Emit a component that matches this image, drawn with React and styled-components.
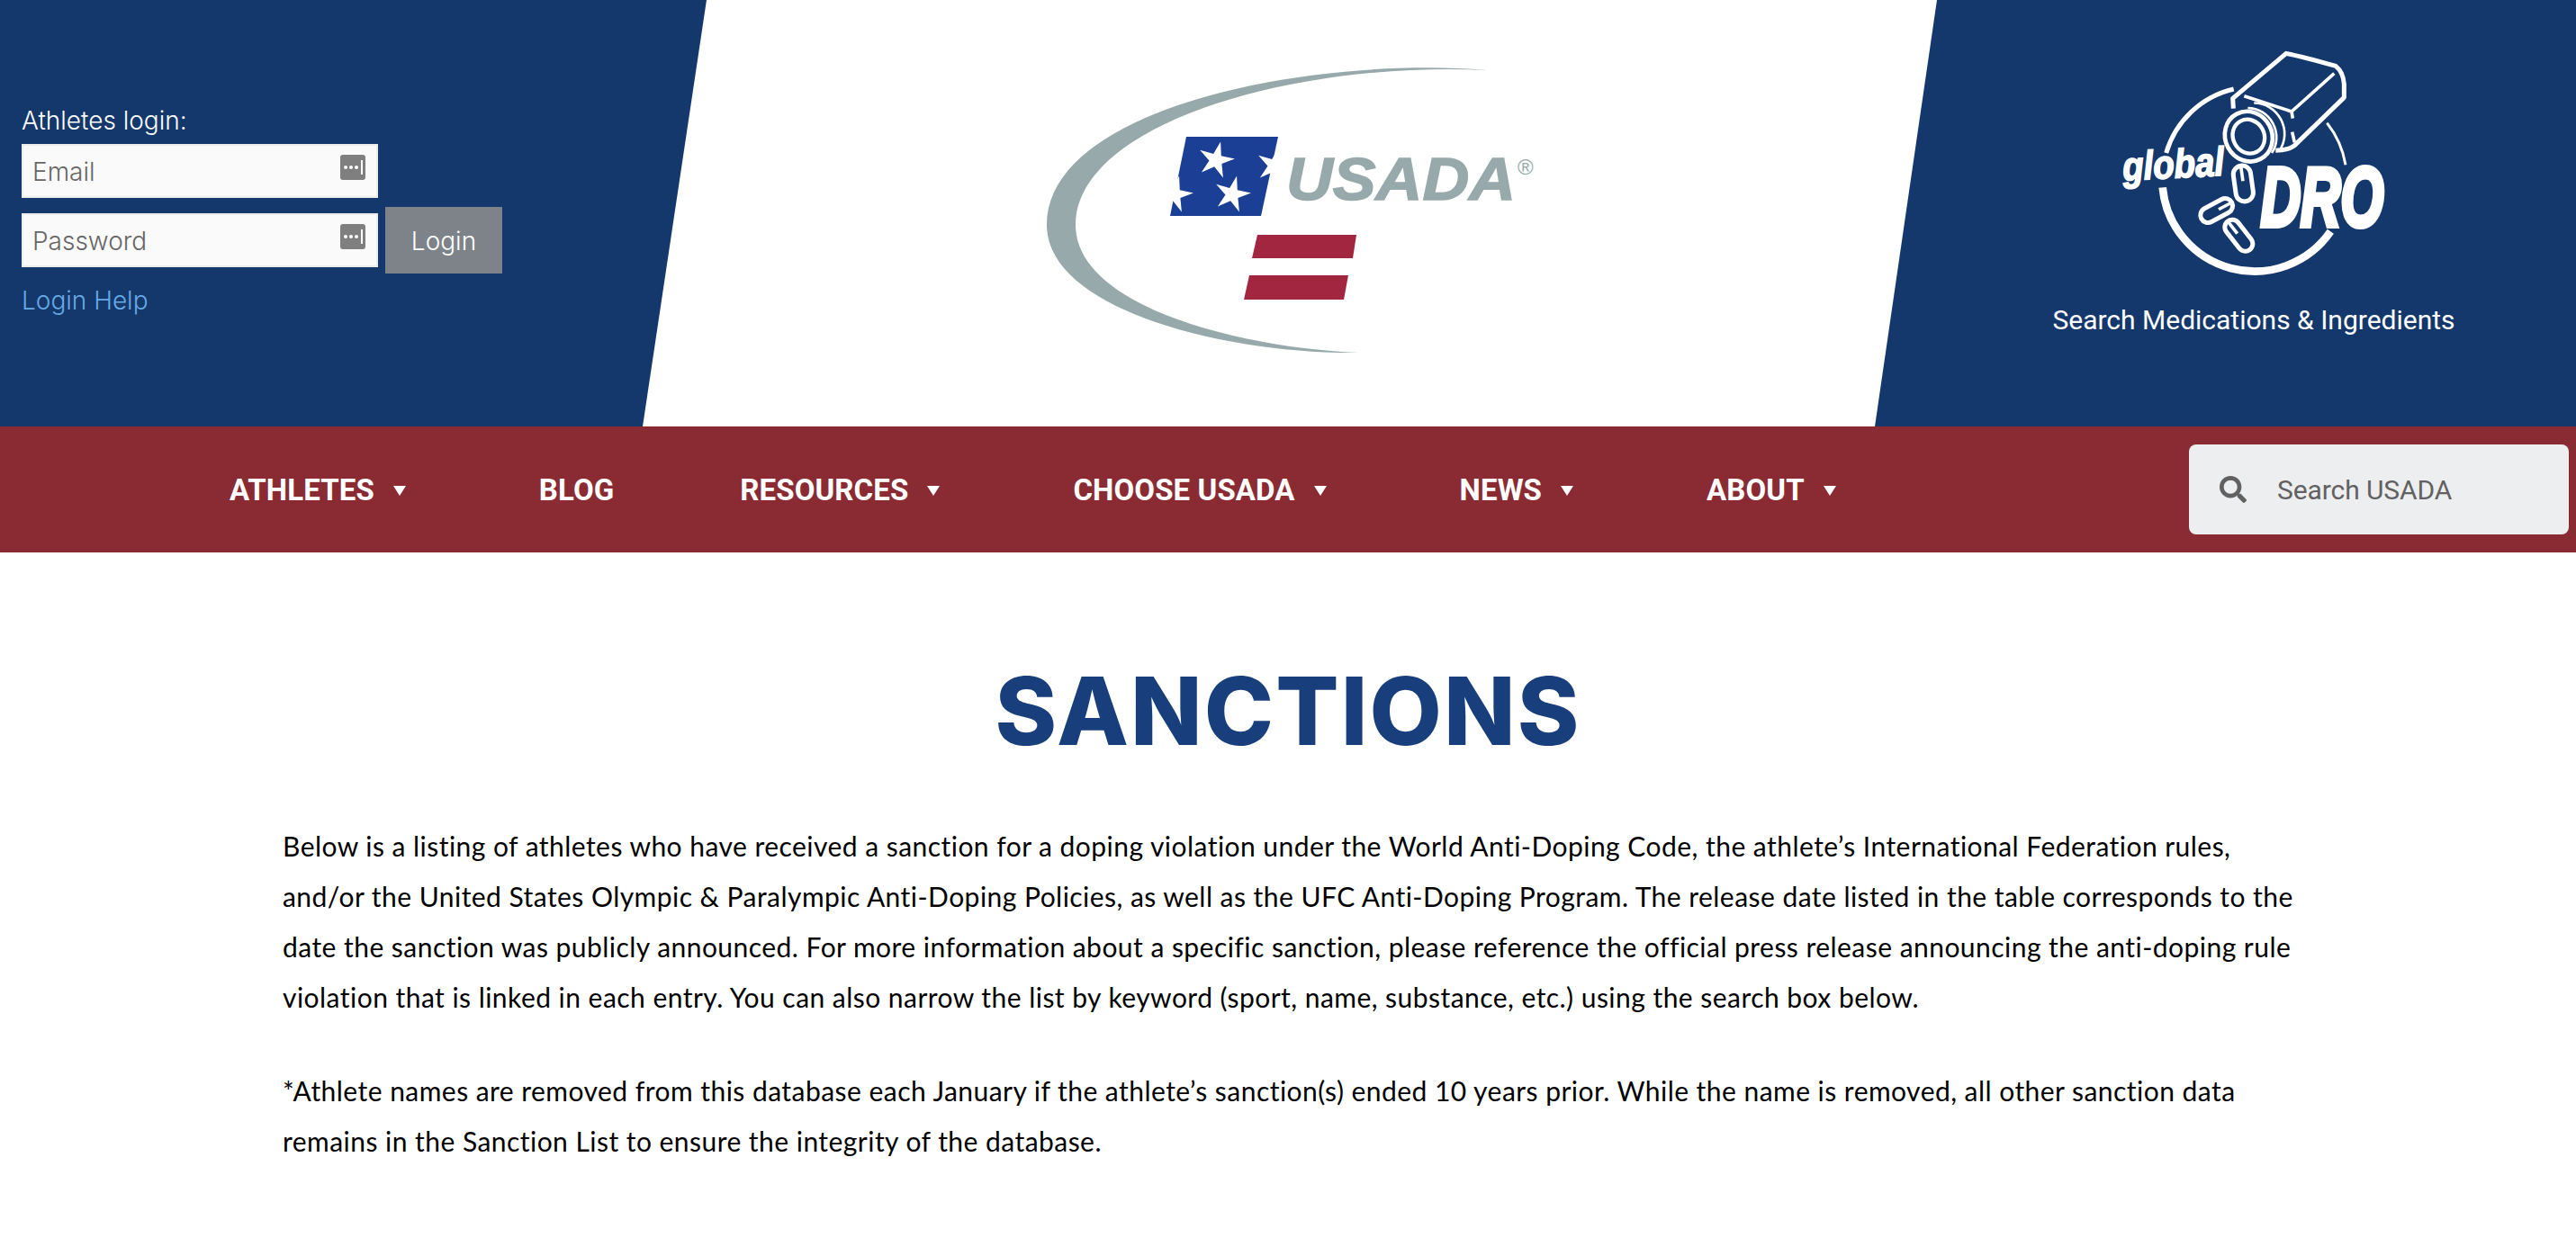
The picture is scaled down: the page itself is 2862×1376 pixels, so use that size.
import React from "react";
import styled, { createGlobalStyle } from "styled-components";
import { FaSearch } from "react-icons/fa";

const GlobalStyle = createGlobalStyle`
  html, body {
    margin: 0;
    padding: 0;
    background: #fff;
  }
  body {
    height: 1376px;
    overflow: hidden;
    font-family: Inter, "Liberation Sans", sans-serif;
  }
`;

const Header = styled.header`
  display: grid;
  grid-template-columns: 714px 1438px 710px;
  height: 474px;
  background: #14386b;
`;

const LoginColumn = styled.form`
  display: flex;
  flex-direction: column;
  padding: 116px 0 0 24px;
`;

const LoginLabel = styled.div`
  color: #fff;
  font-size: 28px;
  font-weight: 350;
  line-height: 36px;
  margin-bottom: 8px;
`;

const LoginRow = styled.div`
  display: flex;
  align-items: center;
  gap: 8px;
  margin-bottom: ${(p) => p.$gap}px;
`;

const InputWrap = styled.div`
  position: relative;
  width: 396px;
  height: 60px;
`;

const LoginInput = styled.input`
  box-sizing: border-box;
  width: 100%;
  height: 100%;
  padding: 2px 0 0 10px;
  border: 2px solid #ececec;
  border-radius: 0;
  background: #fafafa;
  font-family: inherit;
  font-size: 28px;
  font-weight: 300;
  outline: none;
  &::placeholder {
    color: #666;
    opacity: 1;
  }
`;

const KeyIcon = styled.svg`
  position: absolute;
  top: 12px;
  right: 14px;
  width: 28px;
  height: 28px;
`;

const LoginButton = styled.button`
  width: 130px;
  height: 74px;
  border: 0;
  padding: 1px 0 0;
  background: #7d8389;
  color: #fff;
  font-family: inherit;
  font-size: 28px;
  font-weight: 300;
`;

const HelpLink = styled.a`
  color: #69a9e4;
  font-size: 28px;
  font-weight: 300;
  line-height: 36px;
`;

const LogoPanel = styled.div`
  display: flex;
  align-items: center;
  justify-content: center;
  background: #fff;
  clip-path: polygon(71px 0, 100% 0, 1369px 100%, 0 100%);
`;

const DroColumn = styled.div`
  display: flex;
  flex-direction: column;
  align-items: center;
  padding-top: 50px;
`;

const DroMark = styled.svg`
  margin-left: 6px;
`;

const DroCaption = styled.div`
  color: #fff;
  font-family: Roboto, sans-serif;
  font-size: 30px;
  line-height: 36px;
  margin: 28px 6px 0 0;
`;

const NavBar = styled.nav`
  display: flex;
  align-items: center;
  height: 140px;
  padding: 0 8px 0 185px;
  background: #8a2a33;
`;

const NavList = styled.div`
  display: flex;
  flex: 1;
`;

const NavItem = styled.a`
  display: flex;
  align-items: center;
  gap: 21px;
  padding: 0 ${(p) => (p.$caret ? 78 : 70)}px 0 70px;
  color: #fff;
  font-family: Roboto, sans-serif;
  font-size: 33px;
  font-weight: 700;
  letter-spacing: 0.1px;
  white-space: nowrap;
`;

const Caret = styled.span`
  width: 0;
  height: 0;
  margin-top: 2px;
  border-left: 7px solid transparent;
  border-right: 7px solid transparent;
  border-top: 11px solid #fff;
`;

const SearchBox = styled.div`
  display: flex;
  align-items: center;
  box-sizing: border-box;
  width: 422px;
  height: 100px;
  padding-left: 34px;
  border-radius: 8px;
  background: #edeef0;
  color: #616161;
`;

const SearchInput = styled.input`
  flex: 1;
  min-width: 0;
  margin-left: 32px;
  border: 0;
  background: transparent;
  font-family: Roboto, sans-serif;
  font-size: 30px;
  letter-spacing: -0.1px;
  outline: none;
  &::placeholder {
    color: #616161;
    opacity: 1;
  }
`;

const Main = styled.main`
  padding: 0 314px;
`;

const Title = styled.h1`
  margin: 0;
  padding-top: 117px;
  color: #183f7c;
  font-family: Inter, sans-serif;
  font-size: 104px;
  font-weight: 800;
  letter-spacing: 2.1px;
  line-height: 118px;
  text-align: center;
`;

const Copy = styled.p`
  margin: ${(p) => p.$before}px -14px ${(p) => p.$after}px 0;
  color: #000;
  font-family: Lato, sans-serif;
  font-size: 30px;
  letter-spacing: 0.46px;
  line-height: 56px;
`;

function PasswordKey() {
  return (
    <KeyIcon viewBox="0 0 28 28">
      <rect width="28" height="28" rx="3" fill="#7f7f7f" />
      <circle cx="6" cy="14" r="2" fill="#fff" />
      <circle cx="12" cy="14" r="2" fill="#fff" />
      <circle cx="18" cy="14" r="2" fill="#fff" />
      <rect x="23" y="6" width="2" height="16" fill="#fff" />
    </KeyIcon>
  );
}

function Star({ x, y, r }) {
  const points = [];
  for (let i = 0; i < 10; i++) {
    const radius = i % 2 === 0 ? r : r * 0.36;
    const angle = ((i * 36 + 14 - 90) * Math.PI) / 180;
    points.push(`${x + radius * Math.cos(angle)},${y + radius * Math.sin(angle)}`);
  }
  return <polygon points={points.join(" ")} fill="#fff" />;
}

function UsadaLogo() {
  return (
    <svg width="560" height="340" viewBox="1153 67 560 340">
      <path
        d="M1652 78C1460 62 1163 118 1163 250C1163 345 1365 394 1509 392C1375 386 1195 340 1195 250C1195 140 1430 68 1652 78Z"
        fill="#97a9aa"
      />
      <path d="M1318 152H1420L1401 240H1300Z" fill="#1a3f94" />
      <Star x={1351} y={178} r={21} />
      <Star x={1369} y={216} r={21} />
      <Star x={1305} y={216} r={21} />
      <Star x={1416} y={184} r={21} />
      <path d="M1397 261H1507L1503 287H1391Z" fill="#a32640" />
      <path d="M1388 306H1498L1493 333H1382Z" fill="#a32640" />
      <text
        x="1429"
        y="222"
        fontFamily="Liberation Sans"
        fontStyle="italic"
        fontWeight="700"
        fontSize="67"
        fill="#97a9aa"
        stroke="#97a9aa"
        strokeWidth="1.5"
        textLength="255"
        lengthAdjust="spacingAndGlyphs"
      >
        USADA
      </text>
      <text x="1686" y="194" fontFamily="Liberation Sans" fontSize="24" fill="#97a9aa">
        ®
      </text>
    </svg>
  );
}

function Pill({ x, y, w, h, angle }) {
  return (
    <g transform={`translate(${x} ${y}) rotate(${angle})`} fill="none" stroke="#fff" strokeWidth="15">
      <rect x={-w / 2} y={-h / 2} width={w} height={h} rx={w / 2} />
      <path d={`M0 ${-h / 2} V-8`} strokeWidth="11" />
    </g>
  );
}

function DroLogo() {
  return (
    <DroMark width="500" height="260" viewBox="0 60 1500 780">
      <g fill="none" stroke="#fff">
        <path d="M665 207A308 308 0 0 0 440 420" strokeWidth="15" />
        <path d="M428 535A308 308 0 0 0 988 682" strokeWidth="26" />
        <path d="M976 320A308 308 0 0 1 1038 460" strokeWidth="9" />
        <path
          d="M664 272L662 238L840 88Q900 100 1005 130Q1030 150 1033 190L1033 235L868 395Q845 412 805 412"
          strokeWidth="15"
          strokeLinejoin="round"
        />
        <path d="M700 230L858 282L1000 155M858 282L862 305" strokeWidth="11" />
        <path d="M860 350L868 385" strokeWidth="11" />
        <g transform="rotate(-28 715 365)">
          <ellipse cx="715" cy="365" rx="78" ry="85" strokeWidth="14" />
          <ellipse cx="715" cy="365" rx="52" ry="58" strokeWidth="13" />
          <path d="M735 280A90 95 0 0 1 735 450" strokeWidth="8" transform="translate(22 0)" />
          <path d="M735 275A95 100 0 0 1 735 455" strokeWidth="8" transform="translate(48 0)" />
        </g>
      </g>
      <Pill x={697} y={522} w={58} h={120} angle={-8} />
      <Pill x={608} y={612} w={50} h={115} angle={62} />
      <Pill x={682} y={695} w={50} h={120} angle={-38} />
      <text
        x="297"
        y="512"
        transform="rotate(-3 297 512)"
        fontFamily="Liberation Sans"
        fontStyle="italic"
        fontWeight="700"
        fontSize="135"
        fill="#fff"
        stroke="#fff"
        strokeWidth="5"
        textLength="338"
        lengthAdjust="spacingAndGlyphs"
      >
        global
      </text>
      <text
        x="755"
        y="664"
        fontFamily="Liberation Sans"
        fontStyle="italic"
        fontWeight="700"
        fontSize="280"
        fill="#fff"
        stroke="#fff"
        strokeWidth="18"
        textLength="410"
        lengthAdjust="spacingAndGlyphs"
      >
        DRO
      </text>
    </DroMark>
  );
}

const navItems = [
  { label: "ATHLETES", caret: true },
  { label: "BLOG", caret: false },
  { label: "RESOURCES", caret: true },
  { label: "CHOOSE USADA", caret: true },
  { label: "NEWS", caret: true },
  { label: "ABOUT", caret: true },
];

export default function App() {
  return (
    <>
      <GlobalStyle />
      <Header>
        <LoginColumn>
          <LoginLabel>Athletes login:</LoginLabel>
          <LoginRow $gap={10}>
            <InputWrap>
              <LoginInput placeholder="Email" />
              <PasswordKey />
            </InputWrap>
          </LoginRow>
          <LoginRow $gap={12}>
            <InputWrap>
              <LoginInput placeholder="Password" />
              <PasswordKey />
            </InputWrap>
            <LoginButton type="button">Login</LoginButton>
          </LoginRow>
          <HelpLink>Login Help</HelpLink>
        </LoginColumn>
        <LogoPanel>
          <UsadaLogo />
        </LogoPanel>
        <DroColumn>
          <DroLogo />
          <DroCaption>Search Medications &amp; Ingredients</DroCaption>
        </DroColumn>
      </Header>
      <NavBar>
        <NavList>
          {navItems.map((item) => (
            <NavItem key={item.label} $caret={item.caret}>
              {item.label}
              {item.caret && <Caret />}
            </NavItem>
          ))}
        </NavList>
        <SearchBox>
          <FaSearch size={30} />
          <SearchInput placeholder="Search USADA" />
        </SearchBox>
      </NavBar>
      <Main>
        <Title>SANCTIONS</Title>
        <Copy $before={63} $after={48}>
          Below is a listing of athletes who have received a sanction for a doping violation under the World
          Anti-Doping Code, the athlete’s International Federation rules, and/or the United States Olympic &amp;
          Paralympic Anti-Doping Policies, as well as the UFC Anti-Doping Program. The release date listed in the
          table corresponds to the date the sanction was publicly announced. For more information about a specific
          sanction, please reference the official press release announcing the anti-doping rule violation that is
          linked in each entry. You can also narrow the list by keyword (sport, name, substance, etc.) using the
          search box below.
        </Copy>
        <Copy $before={0} $after={0}>
          *Athlete names are removed from this database each January if the athlete’s sanction(s) ended 10 years
          prior. While the name is removed, all other sanction data remains in the Sanction List to ensure the
          integrity of the database.
        </Copy>
      </Main>
    </>
  );
}
